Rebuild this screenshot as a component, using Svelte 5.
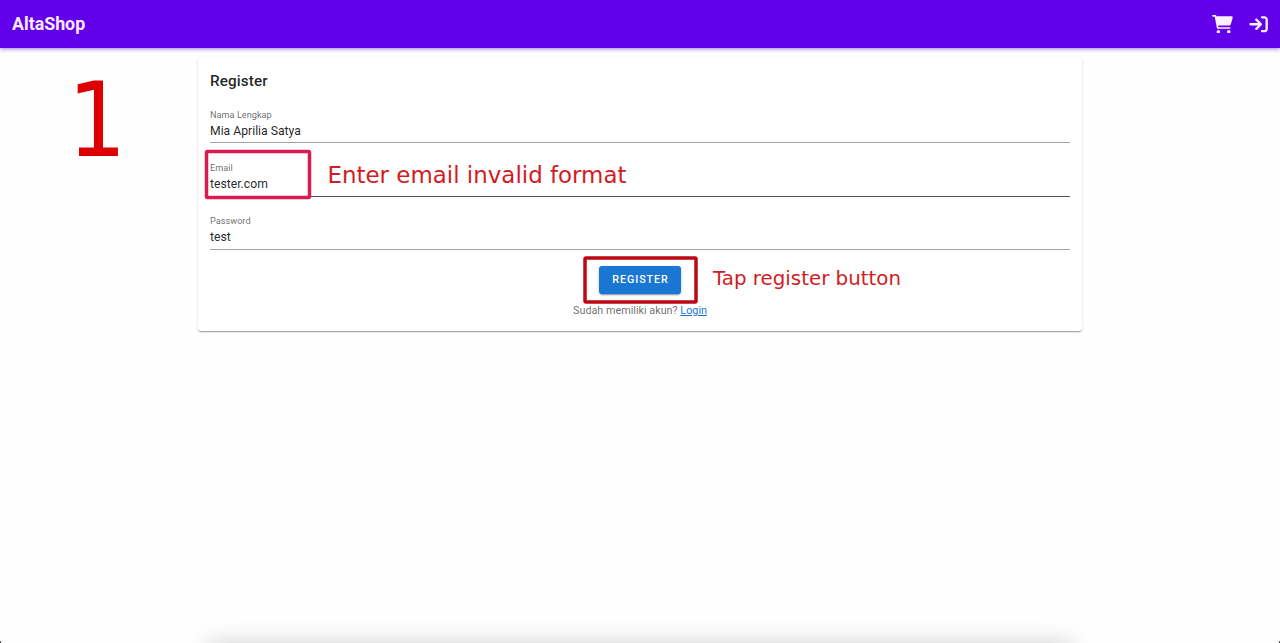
<script>
  const fields = $state([
    { id: 'name', label: 'Nama Lengkap', value: 'Mia Aprilia Satya', active: false },
    { id: 'email', label: 'Email', value: 'tester.com', active: true },
    { id: 'password', label: 'Password', value: 'test', active: false }
  ]);
</script>

<div class="page">
  <header>
    <div class="brand">AltaShop</div>
    <nav>
      <svg class="cart" viewBox="0 0 576 512" aria-hidden="true"><path d="M0 24C0 10.7 10.7 0 24 0H96C107.500 0 117.400 8.190 119.600 19.510L121.100 32H541.800C562.100 32 578.300 52.250 572.600 72.660L518.600 264.700C514.700 278.500 502.100 288 487.800 288H170.700L179.900 336H488C501.300 336 512 346.700 512 360C512 373.300 501.300 384 488 384H159.100C148.500 384 138.600 375.800 136.400 364.500L76.140 48H24C10.750 48 0 37.250 0 24zM128 464a48 48 0 1 1 96 0 48 48 0 1 1 -96 0zm336-48a48 48 0 1 1 0 96 48 48 0 1 1 0-96z" /></svg>
      <svg class="login" viewBox="0 0 512 512" aria-hidden="true"><path d="M352 96l64 0c17.7 0 32 14.3 32 32l0 256c0 17.7-14.3 32-32 32l-64 0c-17.7 0-32 14.3-32 32s14.3 32 32 32l64 0c53 0 96-43 96-96l0-256c0-53-43-96-96-96l-64 0c-17.7 0-32 14.3-32 32s14.3 32 32 32zm-9.4 182.6c12.5-12.5 12.5-32.8 0-45.3l-128-128c-12.5-12.5-32.8-12.5-45.3 0s-12.5 32.8 0 45.3L242.7 224 32 224c-17.7 0-32 14.3-32 32s14.3 32 32 32l210.7 0-73.4 73.4c-12.5 12.5-12.5 32.8 0 45.3s32.8 12.5 45.3 0l128-128z" /></svg>
    </nav>
  </header>

  <main>
    <h1>Register</h1>
    {#each fields as field (field.id)}
      <div class="field" class:active={field.active}>
        <span class="label">{field.label}</span>
        <span class="value">{field.value}</span>
      </div>
    {/each}
    <button type="button">REGISTER</button>
    <p>Sudah memiliki akun? <span class="link">Login</span></p>
  </main>

  <div class="dock"></div>
  <i class="corner left"></i>
  <i class="corner right"></i>

  <svg class="notes" viewBox="0 0 1280 643">
    <text class="step" x="67.5" y="156" textLength="59" lengthAdjust="spacingAndGlyphs">1</text>
    <rect class="email-box" x="206.5" y="151.5" width="103" height="46" rx="1" />
    <text class="note" x="327.5" y="183" font-size="23" textLength="299" lengthAdjust="spacingAndGlyphs">Enter email invalid format</text>
    <rect class="button-box" x="585" y="258" width="111" height="44" rx="1" />
    <text class="note" x="713" y="285" font-size="20" textLength="188" lengthAdjust="spacingAndGlyphs">Tap register button</text>
  </svg>
</div>

<style>
  :global(body) { margin: 0; background: #fefefe; }
  .page {
    position: relative;
    height: 643px;
    overflow: hidden;
    font-family: Roboto, sans-serif;
    color: rgba(0, 0, 0, 0.87);
  }
  header {
    box-sizing: border-box;
    height: 48px;
    padding: 0 12px;
    display: flex;
    align-items: center;
    justify-content: space-between;
    background: #6200ea;
    box-shadow: 0 1px 4px rgba(70, 0, 190, 0.5);
  }
  .brand { color: #fbe9ff; font-size: 17.8px; font-weight: 700; line-height: 24px; }
  nav { display: flex; align-items: center; gap: 16px; }
  nav svg { fill: #fff0ff; height: 18.5px; display: block; }
  .cart { width: 20.8px; }
  .login { width: 19.2px; }
  main {
    box-sizing: border-box;
    width: 884px;
    height: 273px;
    margin: 10px auto 0;
    padding: 12px 12px 0;
    border-radius: 3px;
    background: #fff;
    display: flex;
    flex-direction: column;
    box-shadow: 0 2px 1px -1px rgba(0, 0, 0, 0.2), 0 1px 1px rgba(0, 0, 0, 0.14), 0 1px 3px rgba(0, 0, 0, 0.12);
  }
  h1 { margin: 0 0 16px; font-size: 15.3px; font-weight: 500; line-height: 23px; letter-spacing: 0.1px; }
  .field {
    box-sizing: border-box;
    height: 35px;
    margin-bottom: 18px;
    border-bottom: 1px solid #a0a0a0;
    display: flex;
    flex-direction: column;
  }
  h1 + .field { height: 34px; margin-bottom: 19px; }
  .field.active { border-color: #505050; }
  .label { font-size: 9.2px; line-height: 11px; color: rgba(0, 0, 0, 0.6); }
  .value { font-size: 12.2px; line-height: 22px; }
  button {
    align-self: center;
    width: 82px;
    height: 28px;
    flex: none;
    margin: -2px 0 0;
    padding: 0 0 0 1px;
    border: 0;
    border-radius: 3px;
    background: #1976d2;
    color: #fff;
    font: 500 10.7px/28px Roboto, sans-serif;
    letter-spacing: 0.96px;
    box-shadow: 0 2px 1px -1px rgba(0, 0, 0, 0.25), 0 1px 3px rgba(0, 0, 0, 0.25);
  }
  p { margin: 9px 0 0; text-align: center; font-size: 10.8px; line-height: 16px; color: rgba(0, 0, 0, 0.6); }
  .link { color: #1976d2; text-decoration: underline; }
  .dock {
    position: absolute;
    left: 212px;
    right: 212px;
    top: 647px;
    height: 30px;
    box-shadow: 0 0 24px 3px rgba(0, 0, 0, 0.2);
  }
  .corner { position: absolute; bottom: 0; width: 1px; height: 2px; background: #555; }
  .left { left: 0; }
  .right { right: 0; }
  .notes { position: absolute; inset: 0; width: 1280px; height: 643px; }
  .notes text { font-family: "DejaVu Sans", sans-serif; }
  .step { font-size: 104px; fill: #dc0000; }
  .note { fill: #d01c24; }
  .notes rect { fill: none; stroke-width: 3.5; }
  .email-box { stroke: #d81b50; }
  .button-box { stroke: #bd0712; }
</style>
